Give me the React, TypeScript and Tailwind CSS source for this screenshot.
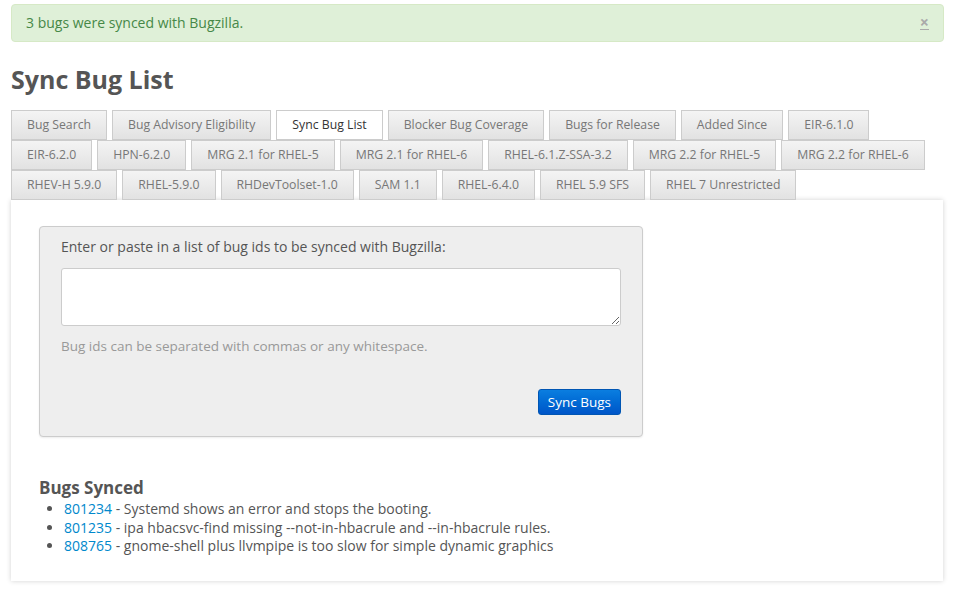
import React from 'react';

const TABS = [
  'Bug Search',
  'Bug Advisory Eligibility',
  'Sync Bug List',
  'Blocker Bug Coverage',
  'Bugs for Release',
  'Added Since',
  'EIR-6.1.0',
  'EIR-6.2.0',
  'HPN-6.2.0',
  'MRG 2.1 for RHEL-5',
  'MRG 2.1 for RHEL-6',
  'RHEL-6.1.Z-SSA-3.2',
  'MRG 2.2 for RHEL-5',
  'MRG 2.2 for RHEL-6',
  'RHEV-H 5.9.0',
  'RHEL-5.9.0',
  'RHDevToolset-1.0',
  'SAM 1.1',
  'RHEL-6.4.0',
  'RHEL 5.9 SFS',
  'RHEL 7 Unrestricted',
];

const SYNCED = [
  { id: '801234', text: 'Systemd shows an error and stops the booting.' },
  { id: '801235', text: 'ipa hbacsvc-find missing --not-in-hbacrule and --in-hbacrule rules.' },
  { id: '808765', text: 'gnome-shell plus llvmpipe is too slow for simple dynamic graphics' },
];

export default function App() {
  return (
    <div
      className="min-h-[612px] bg-white text-[#555]"
      style={{ fontFamily: '"Open Sans", "DejaVu Sans", sans-serif' }}
    >
      <div className="px-[11px] pt-1">
        {/* flash message */}
        <div className="flex h-[38px] items-center justify-between rounded border border-[#d6e9c6] bg-[#dff0d8] pr-[14px] pb-[1px] pl-[14px] text-[14px] text-[#468847]">
          <span>3 bugs were synced with Bugzilla.</span>
          <span className="border-b border-[#aaa] text-[16px] font-bold leading-[13px] text-[#aaa]">×</span>
        </div>

        <h1 className="mt-[21px] mb-[15px] text-[25px] font-bold leading-[32px] text-[#555]">
          Sync Bug List
        </h1>

        {/* tabs */}
        <div className="flex flex-wrap">
          {TABS.map((t) => (
            <div
              key={t}
              className={`mr-[5px] flex h-[30px] items-center border border-[#ccc] px-[15px] pt-[1px] text-[12.25px] ${
                t === 'Sync Bug List'
                  ? 'bg-white text-[#333]'
                  : 'bg-gradient-to-b from-[#f4f4f4] to-[#e2e2e2] text-[#777]'
              }`}
            >
              {t}
            </div>
          ))}
        </div>

        {/* panel */}
        <div className="mr-[1px] h-[381px] bg-white pt-[26px] pl-[28px] shadow-[0_0_5px_rgba(0,0,0,0.18)]">
          <div className="w-[604px] rounded border border-[#ccc] bg-[#eee] px-[21px] pt-[10px] pb-[21px] shadow-[0_1px_2px_rgba(0,0,0,0.08)]">
            <div className="text-[14px] leading-[20px] text-[#555]">
              Enter or paste in a list of bug ids to be synced with Bugzilla:
            </div>
            <textarea className="mt-[11px] block h-[58px] w-full resize-y rounded-[3px] border border-[#ccc] bg-white" />
            <div className="mt-[11px] text-[13.5px] leading-[18px] text-[#999]">
              Bug ids can be separated with commas or any whitespace.
            </div>
            <div className="mt-[34px] flex justify-end">
              <button className="h-[26px] rounded-[3px] border border-[#0055b3] bg-gradient-to-b from-[#0b7ee0] to-[#0055c8] px-[9px] text-[13.5px] text-white">
                Sync Bugs
              </button>
            </div>
          </div>

          <h3 className="mt-[40px] text-[17px] font-bold leading-[22px] text-[#555]">Bugs Synced</h3>
          <ul className="mt-[1px] ml-[25px] list-disc text-[14px] leading-[18.5px] text-[#555]">
            {SYNCED.map((b) => (
              <li key={b.id}>
                <a className="text-[#0088cc]">{b.id}</a> - {b.text}
              </li>
            ))}
          </ul>
        </div>
      </div>
    </div>
  );
}
